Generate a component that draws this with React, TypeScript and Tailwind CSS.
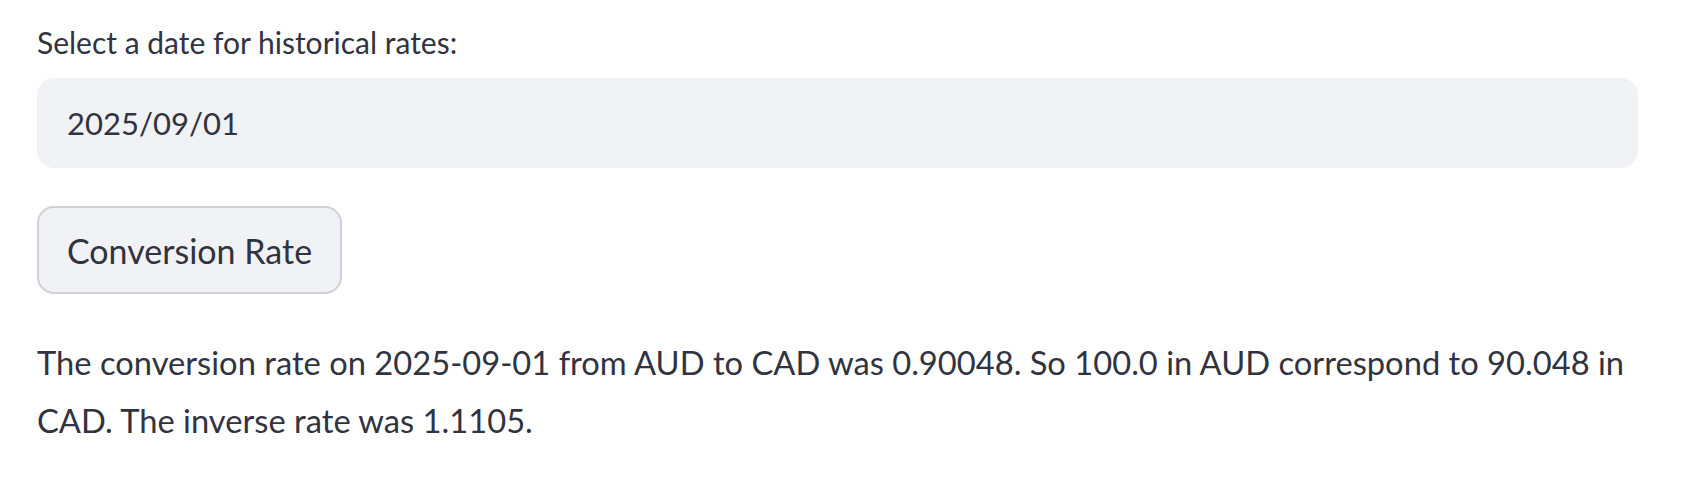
import React, { useState } from 'react';

const App = () => {
  const [date] = useState('2025/09/01');

  return (
    <div
      className="w-full min-h-screen bg-white pl-[37px] pr-[43px] pt-[18px] text-[#31333f]"
      style={{ fontFamily: '"Source Sans Pro", Lato, "Noto Sans", sans-serif' }}
    >
      {/* date input */}
      <label htmlFor="date" className="block h-[48px] leading-[48px] text-[30px]">
        Select a date for historical rates:
      </label>
      <div className="mt-[12px] flex h-[90px] items-center rounded-[17px] bg-[#f0f2f6] px-[30px]">
        <input
          id="date"
          readOnly
          value={date}
          className="w-full bg-transparent text-[31px] text-[#31333f] outline-none"
        />
      </div>

      {/* button */}
      <button
        type="button"
        className="mt-[38px] flex h-[88px] w-[305px] items-center justify-center rounded-[17px] border-2 border-[#cfd1d7] bg-[#f0f2f6] text-[34px] text-[#31333f]"
      >
        Conversion Rate
      </button>

      {/* result */}
      <p className="mt-[40px] text-[32.7px] leading-[58px]">
        The conversion rate on 2025-09-01 from AUD to CAD was 0.90048. So 100.0 in AUD correspond to 90.048 in
        CAD. The inverse rate was 1.1105.
      </p>
    </div>
  );
};

export default App;
